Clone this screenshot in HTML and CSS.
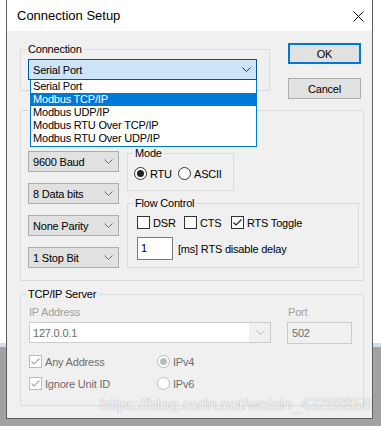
FILE: index.html
```html
<!DOCTYPE html>
<html lang="en">
<head>
  <meta charset="UTF-8">
  <title>Connection Setup</title>
  <link rel="stylesheet" href="styles.css">
</head>
<body>
  <div class="window">
    <div class="titlebar">
      <span class="title">Connection Setup</span>
      <svg class="close" width="11" height="11" viewBox="0 0 11 11"><path d="M0.5 0.5 L10.5 10.5 M10.5 0.5 L0.5 10.5" stroke="#111" stroke-width="1"/></svg>
    </div>

    <div class="content">
      <div class="top-row">
        <fieldset class="group group-conn">
          <legend>Connection</legend>
          <div class="combo combo-open">
            <span class="combo-text">Serial Port</span>
            <svg class="chev" width="9" height="5" viewBox="0 0 9 5"><path d="M0.5 0.5 L4.5 4.5 L8.5 0.5" fill="none" stroke="#333"/></svg>
            <ul class="droplist">
              <li>Serial Port</li>
              <li class="selected">Modbus TCP/IP</li>
              <li>Modbus UDP/IP</li>
              <li>Modbus RTU Over TCP/IP</li>
              <li>Modbus RTU Over UDP/IP</li>
            </ul>
          </div>
        </fieldset>
        <div class="buttons">
          <button class="btn btn-default">OK</button>
          <button class="btn">Cancel</button>
        </div>
      </div>

      <!-- serial settings group: its caption sits under the open drop list -->
      <fieldset class="group group-serial">
        <div class="serial-cols">
          <div class="serial-left">
            <div class="combo"><span class="combo-text">9600 Baud</span><svg class="chev" width="9" height="5" viewBox="0 0 9 5"><path d="M0.5 0.5 L4.5 4.5 L8.5 0.5" fill="none" stroke="#707070"/></svg></div>
            <div class="combo"><span class="combo-text">8 Data bits</span><svg class="chev" width="9" height="5" viewBox="0 0 9 5"><path d="M0.5 0.5 L4.5 4.5 L8.5 0.5" fill="none" stroke="#707070"/></svg></div>
            <div class="combo"><span class="combo-text">None Parity</span><svg class="chev" width="9" height="5" viewBox="0 0 9 5"><path d="M0.5 0.5 L4.5 4.5 L8.5 0.5" fill="none" stroke="#707070"/></svg></div>
            <div class="combo"><span class="combo-text">1 Stop Bit</span><svg class="chev" width="9" height="5" viewBox="0 0 9 5"><path d="M0.5 0.5 L4.5 4.5 L8.5 0.5" fill="none" stroke="#707070"/></svg></div>
          </div>
          <div class="serial-right">
            <fieldset class="group group-mode">
              <legend>Mode</legend>
              <div class="radio-row">
                <label class="opt opt-rtu"><span class="radio on"></span>RTU</label>
                <label class="opt"><span class="radio"></span>ASCII</label>
              </div>
            </fieldset>
            <fieldset class="group group-flow">
              <legend>Flow Control</legend>
              <div class="check-row">
                <label class="opt opt-flow"><span class="check"></span>DSR</label>
                <label class="opt opt-flow"><span class="check"></span>CTS</label>
                <label class="opt"><span class="check"><svg width="11" height="11" viewBox="0 0 11 11"><path d="M1.5 5.5 L4 8 L9.5 2.5" fill="none" stroke="#222" stroke-width="1.2"/></svg></span>RTS Toggle</label>
              </div>
              <div class="delay-row">
                <span class="textbox">1</span>
                <span>[ms] RTS disable delay</span>
              </div>
            </fieldset>
          </div>
        </div>
      </fieldset>

      <fieldset class="group group-tcp">
        <legend>TCP/IP Server</legend>
        <div class="tcp-top">
          <div class="ip-col">
            <div class="dim-label">IP Address</div>
            <div class="ip-combo">
              <span class="ip-text">127.0.0.1</span>
              <svg class="chev" width="9" height="5" viewBox="0 0 9 5"><path d="M0.5 0.5 L4.5 4.5 L8.5 0.5" fill="none" stroke="#b8b8b8"/></svg>
            </div>
          </div>
          <div class="port-col">
            <div class="dim-label">Port</div>
            <div class="port-box">502</div>
          </div>
        </div>
        <div class="tcp-opts">
          <div class="opt-line">
            <label class="opt opt-tcp off"><span class="check dis"><svg width="11" height="11" viewBox="0 0 11 11"><path d="M1.5 5.5 L4 8 L9.5 2.5" fill="none" stroke="#a8a8a8" stroke-width="1.1"/></svg></span>Any Address</label>
            <label class="opt off"><span class="radio dis on"></span>IPv4</label>
          </div>
          <div class="opt-line">
            <label class="opt opt-tcp off"><span class="check dis"><svg width="11" height="11" viewBox="0 0 11 11"><path d="M1.5 5.5 L4 8 L9.5 2.5" fill="none" stroke="#a8a8a8" stroke-width="1.1"/></svg></span>Ignore Unit ID</label>
            <label class="opt off"><span class="radio dis"></span>IPv6</label>
          </div>
        </div>
      </fieldset>
    </div>

    <div class="watermark">https://blog.csdn.net/weixin_43288858</div>
  </div>
</body>
</html>
```

FILE: styles.css
```css
body {
  margin: 0;
  height: 426px;
  overflow: hidden;
  font-family: "Liberation Sans", Arial, sans-serif;
  font-size: 11px;
  letter-spacing: -0.2px;
  color: #000;
  background: linear-gradient(to bottom, #fff 0, #fff 343px, #cfdff0 343px, #cfdff0 347px, #a2a2a2 347px);
}

.window {
  position: relative;
  margin-left: 6px;
  width: 365px;
  height: 418px;
  background: #f0f0f0;
  border: 1px solid #5e5e5e;
  border-top: none;
}

.titlebar {
  height: 31px;
  background: #fff;
  display: flex;
  align-items: center;
  justify-content: space-between;
  padding-left: 10px;
  padding-right: 8px;
}
.title {
  font-size: 13px;
  letter-spacing: 0;
}
.close {
  margin-top: 1px;
}

.content {
  padding: 12px 0 0 13px;
}

/* group boxes */
.group {
  margin: 0;
  padding: 0;
  border: 1px solid #dcdcdc;
  box-sizing: border-box;
  min-width: 0;
}
.group legend {
  margin-left: 5px;
  padding: 0 2px;
  line-height: 13px;
}

.top-row {
  display: flex;
  align-items: flex-start;
}
.group-conn {
  width: 250px;
  height: 48px;
}
.buttons {
  margin-left: 18px;
  display: flex;
  flex-direction: column;
  gap: 14px;
}
.btn {
  width: 73px;
  height: 21px;
  padding: 0;
  font: inherit;
  letter-spacing: inherit;
  background: #e1e1e1;
  border: 1px solid #adadad;
  color: #000;
}
.btn-default {
  border: 2px solid #0078d7;
}

/* combo boxes */
.combo {
  position: relative;
  box-sizing: border-box;
  width: 91px;
  height: 21px;
  background: #e1e1e1;
  border: 1px solid #adadad;
  display: flex;
  align-items: center;
  justify-content: space-between;
  padding: 0 5px 0 4px;
}
.combo-open {
  width: 229px;
  margin: 3px 0 0 7px;
  background: #cce4f7;
  border-color: #005499;
}
.droplist {
  position: absolute;
  z-index: 2;
  left: 1px;
  right: -1px;
  top: 20px;
  margin: 0;
  padding: 0;
  list-style: none;
  background: #fff;
  border: 1px solid #0078d7;
  border-top: none;
  height: 66px;
}
.droplist li {
  height: 13px;
  line-height: 13px;
  padding-left: 2px;
}
.droplist li.selected {
  background: #0078d7;
  color: #fff;
}

/* serial settings */
.group-serial {
  margin-top: 11px;
  width: 344px;
  height: 171px;
}
.serial-cols {
  display: flex;
}
.serial-left {
  margin-left: 7px;
  padding-top: 40px;
  display: flex;
  flex-direction: column;
  gap: 11px;
}
.serial-right {
  margin-left: 8px;
  padding-top: 36px;
}
.group-mode {
  width: 107px;
  height: 44px;
}
.group-flow {
  margin-top: 6px;
  width: 232px;
  height: 71px;
}

.opt {
  display: inline-flex;
  align-items: center;
  gap: 3px;
  height: 13px;
}
.radio-row {
  margin-top: 7px;
  padding-left: 6px;
  display: flex;
}
.opt-rtu {
  width: 44px;
}
.radio {
  box-sizing: border-box;
  width: 13px;
  height: 13px;
  border: 1px solid #333;
  border-radius: 50%;
  background: #fff;
  display: flex;
  align-items: center;
  justify-content: center;
}
.radio.on::after {
  content: "";
  width: 7px;
  height: 7px;
  border-radius: 50%;
  background: #222;
}
.check {
  box-sizing: border-box;
  width: 13px;
  height: 13px;
  border: 1px solid #333;
  background: #fff;
  display: flex;
}
.check-row {
  margin-top: 6px;
  padding-left: 9px;
  display: flex;
}
.opt-flow {
  width: 47px;
}
.delay-row {
  margin-top: 8px;
  padding-left: 9px;
  display: flex;
  align-items: center;
  gap: 5px;
}
.textbox {
  box-sizing: border-box;
  width: 36px;
  height: 23px;
  background: #fff;
  border: 1px solid #7a7a7a;
  padding: 4px 0 0 3px;
}

/* tcp/ip server */
.group-tcp {
  margin-top: 7px;
  width: 344px;
  height: 118px;
}
.tcp-top {
  display: flex;
}
.ip-col {
  margin-left: 8px;
}
.dim-label {
  margin-top: 5px;
  line-height: 13px;
  color: #a0a0a0;
}
.ip-combo {
  box-sizing: border-box;
  margin-top: 3px;
  width: 242px;
  height: 21px;
  border: 1px solid #cccccc;
  background: #f0f0f0;
  display: flex;
  align-items: center;
  justify-content: space-between;
  padding-right: 5px;
}
.ip-text {
  align-self: stretch;
  width: 219px;
  background: #fff;
  padding: 4px 0 0 3px;
  box-sizing: border-box;
  color: #6d6d6d;
}
.port-col {
  margin-left: 16px;
}
.port-col .dim-label {
  padding-left: 1px;
}
.port-box {
  box-sizing: border-box;
  margin-top: 3px;
  width: 65px;
  height: 22px;
  border: 1px solid #cccccc;
  background: #f0f0f0;
  color: #6d6d6d;
  padding: 4px 0 0 4px;
}
.tcp-opts {
  margin-top: 11px;
  padding-left: 8px;
  display: flex;
  flex-direction: column;
  gap: 9px;
}
.opt-line {
  display: flex;
}
.opt-tcp {
  width: 128px;
}
.off {
  color: #6d6d6d;
}
.check.dis,
.radio.dis {
  border-color: #bcbcbc;
}
.radio.dis.on::after {
  background: #bcbcbc;
}

.watermark {
  position: absolute;
  top: 396px;
  right: 0;
  font-size: 16px;
  letter-spacing: 0;
  color: rgba(255, 255, 255, 0.9);
  text-shadow: 0 0 1px rgba(0, 0, 0, 0.4);
  white-space: nowrap;
}
```
